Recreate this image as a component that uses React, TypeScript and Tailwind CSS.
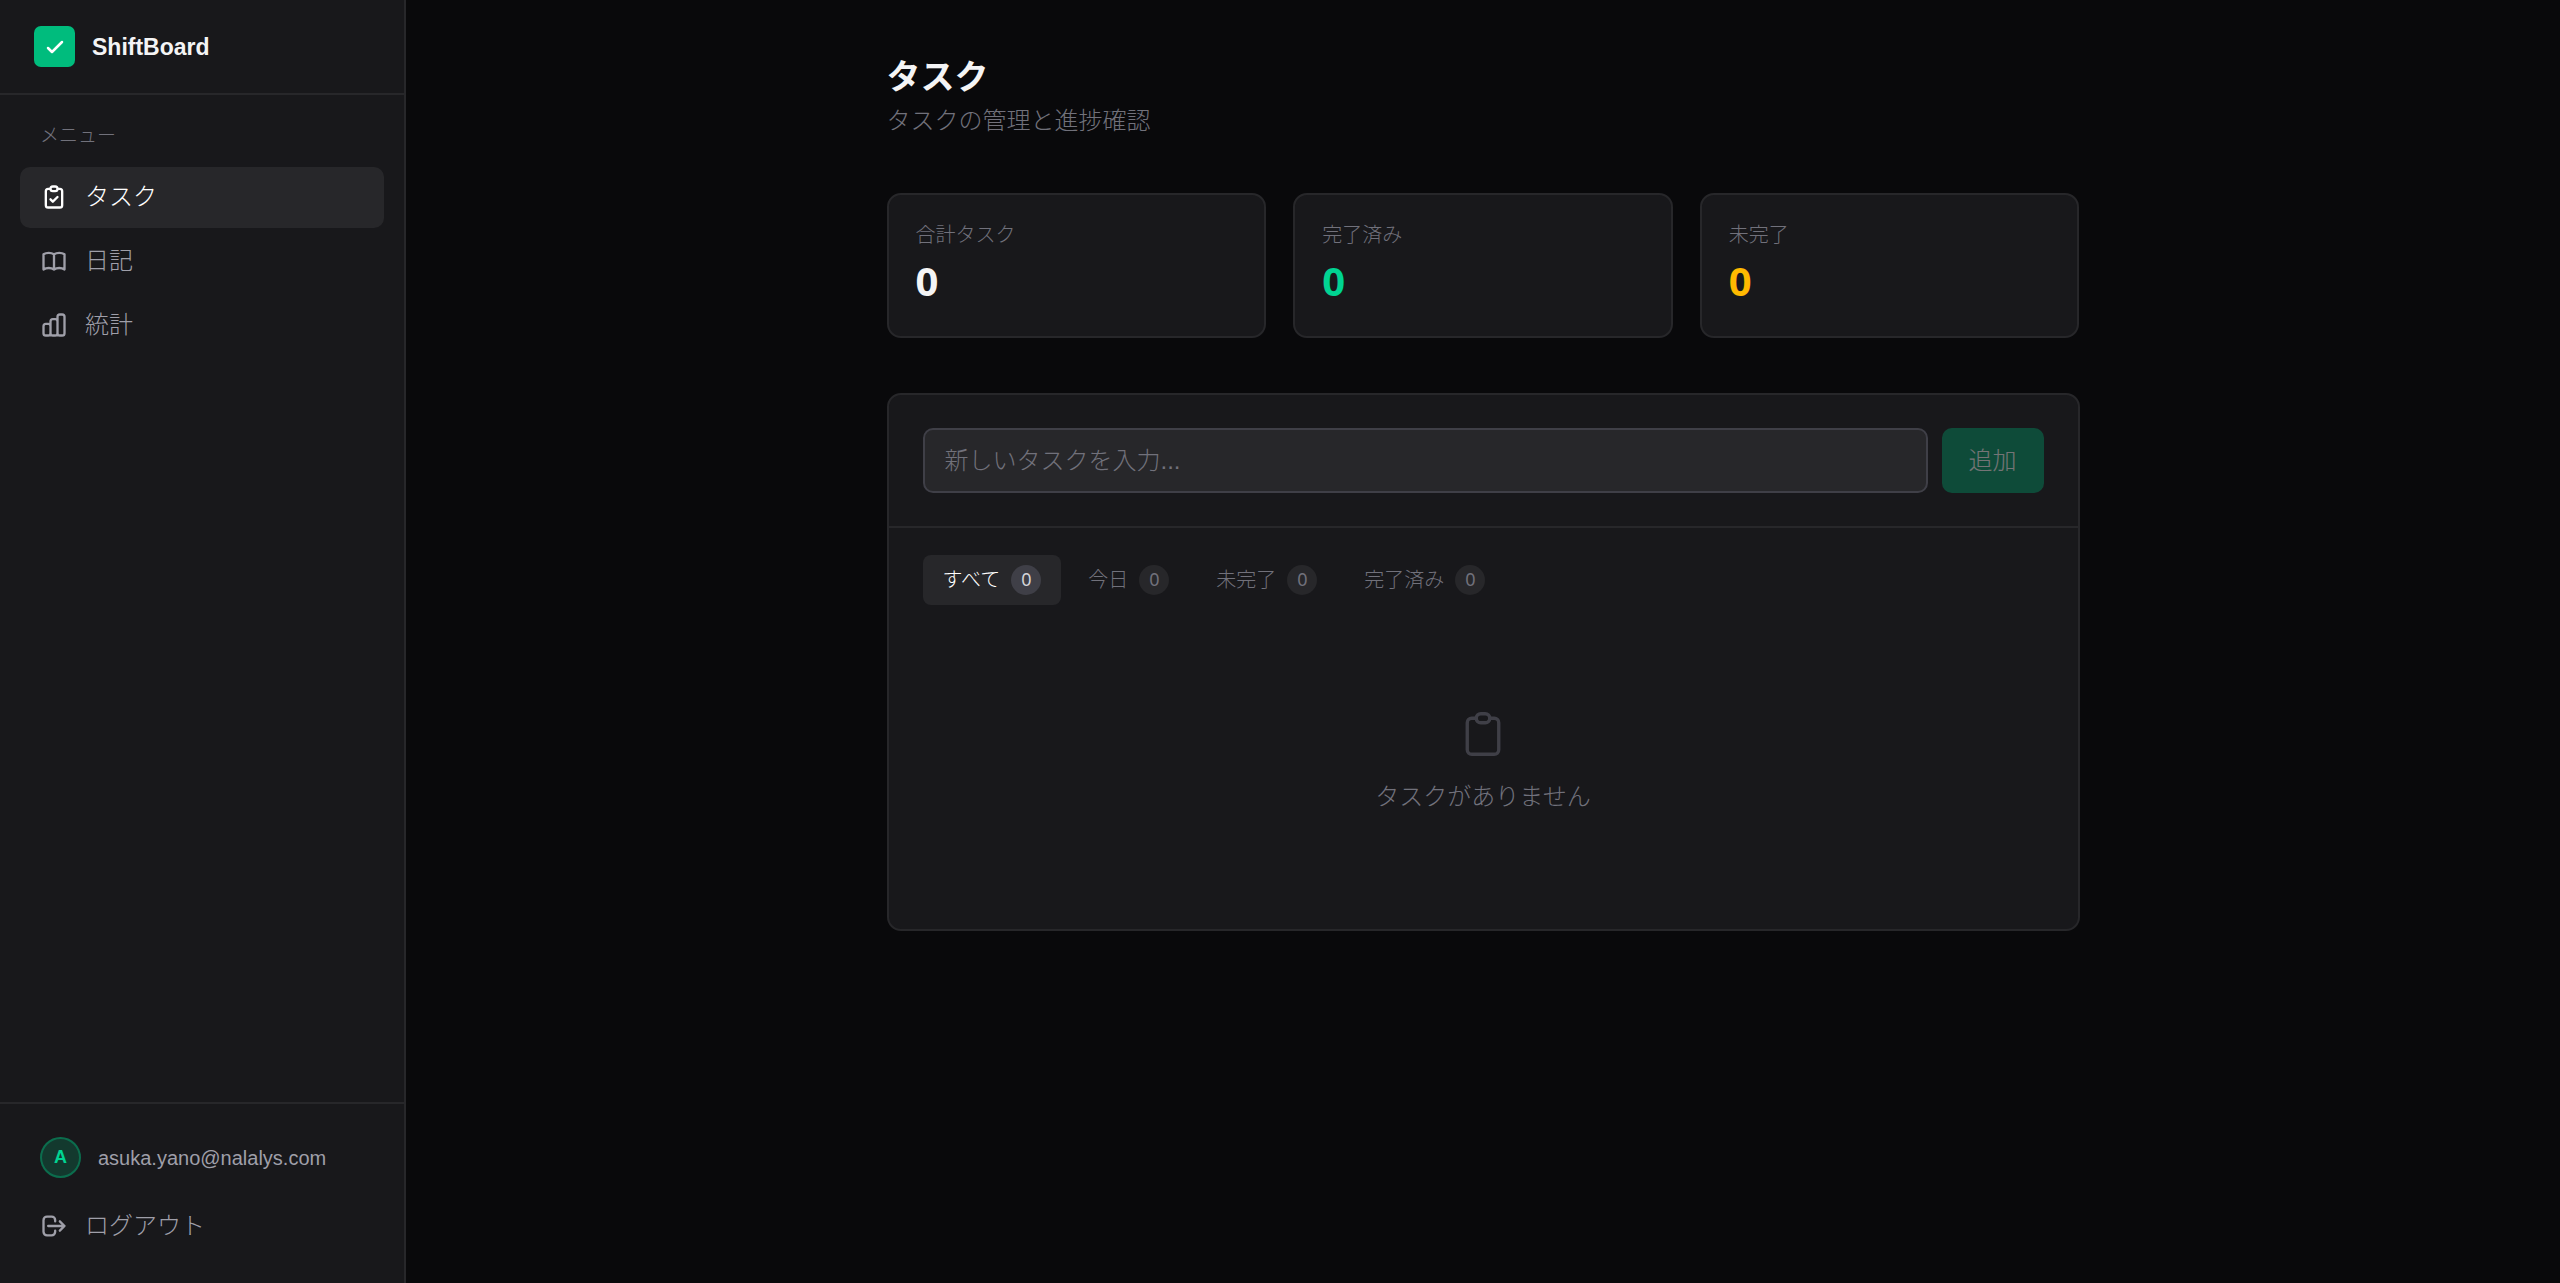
import { useState } from "react";
import type { ReactNode } from "react";

const CLIPBOARD =
  "M9 5H7a2 2 0 00-2 2v12a2 2 0 002 2h10a2 2 0 002-2V7a2 2 0 00-2-2h-2M9 5a2 2 0 002 2h2a2 2 0 002-2M9 5a2 2 0 012-2h2a2 2 0 012 2";

const PATHS = {
  check: "M5 13l4 4L19 7",
  clipboard: CLIPBOARD,
  tasks: CLIPBOARD + "m-6 9l2 2 4-4",
  book: "M12 6.253v13m0-13C10.832 5.477 9.246 5 7.5 5S4.168 5.477 3 6.253v13C4.168 18.477 5.754 18 7.5 18s3.332.477 4.5 1.253m0-13C13.168 5.477 14.754 5 16.5 5c1.747 0 3.332.477 4.5 1.253v13C19.832 18.477 18.247 18 16.5 18c-1.746 0-3.332.477-4.5 1.253",
  chart:
    "M9 19v-6a2 2 0 00-2-2H5a2 2 0 00-2 2v6a2 2 0 002 2h2a2 2 0 002-2zm0 0V9a2 2 0 012-2h2a2 2 0 012 2v10m-6 0a2 2 0 002 2h2a2 2 0 002-2m0 0V5a2 2 0 012-2h2a2 2 0 012 2v14a2 2 0 01-2 2h-2a2 2 0 01-2-2z",
  logout:
    "M17 16l4-4m0 0l-4-4m4 4H7m6 4v1a3 3 0 01-3 3H6a3 3 0 01-3-3V7a3 3 0 013-3h4a3 3 0 013 3v1",
};

function Icon({ name, className, stroke = 2 }: { name: keyof typeof PATHS; className: string; stroke?: number }) {
  return (
    <svg
      className={className}
      viewBox="0 0 24 24"
      fill="none"
      stroke="currentColor"
      strokeWidth={stroke}
      strokeLinecap="round"
      strokeLinejoin="round"
      aria-hidden="true"
    >
      <path d={PATHS[name]} />
    </svg>
  );
}

function NavItem({ icon, active, children }: { icon: keyof typeof PATHS; active?: boolean; children: ReactNode }) {
  return (
    <a
      href="#"
      aria-current={active ? "page" : undefined}
      className={`flex items-center gap-[17px] rounded-[10px] px-5 pt-3 pb-[13px] text-2xl leading-9 ${
        active ? "bg-zinc-800 text-white" : "text-zinc-400"
      }`}
    >
      <Icon name={icon} className="size-7 shrink-0" />
      <span>{children}</span>
    </a>
  );
}

function StatCard({ label, value, color }: { label: string; value: number; color: string }) {
  return (
    <div className="rounded-[14px] border-2 border-zinc-800 bg-zinc-900 px-[27px] pt-[26px] pb-[30px]">
      <p className="text-xl leading-7 text-zinc-500">{label}</p>
      <p className={`mt-[7px] font-['Noto_Sans',sans-serif] text-[40px] leading-[50px] font-bold ${color}`}>
        {value}
      </p>
    </div>
  );
}

const FILTERS = ["すべて", "今日", "未完了", "完了済み"];

export default function App() {
  const [filter, setFilter] = useState(FILTERS[0]);
  const [draft, setDraft] = useState("");

  return (
    <div className="flex min-h-screen bg-zinc-950 font-['Liberation_Sans','Noto_Sans_CJK_JP',sans-serif] font-light text-zinc-100">
      <aside className="flex w-[406px] shrink-0 flex-col border-r-2 border-zinc-800 bg-zinc-900">
        <div className="flex items-center gap-[17px] border-b-2 border-zinc-800 px-[34px] py-[26px]">
          <div className="flex size-[41px] items-center justify-center rounded-[7px] bg-emerald-500 text-white">
            <Icon name="check" className="size-6" stroke={2.5} />
          </div>
          <span className="text-[23px] leading-8 font-semibold">ShiftBoard</span>
        </div>

        <nav className="flex flex-1 flex-col gap-[3px] px-5 pt-[29px]" aria-label="メニュー">
          <p className="mb-4 px-5 text-[19px] leading-6 text-zinc-500">メニュー</p>
          <NavItem icon="tasks" active>
            タスク
          </NavItem>
          <NavItem icon="book">日記</NavItem>
          <NavItem icon="chart">統計</NavItem>
        </nav>

        <div className="border-t-2 border-zinc-800 px-5 pt-[33px] pb-[26px]">
          <div className="mb-[18px] flex items-center gap-[17px] px-5">
            <div className="flex size-[41px] items-center justify-center rounded-full border-2 border-emerald-500/40 bg-emerald-500/20 text-[18px] font-bold text-emerald-400">
              A
            </div>
            <span className="text-xl font-normal text-zinc-400">asuka.yano@nalalys.com</span>
          </div>
          <button
            type="button"
            className="flex w-full items-center gap-[17px] rounded-[10px] px-5 pt-3 pb-[13px] text-left text-2xl leading-9 text-zinc-400"
          >
            <Icon name="logout" className="size-7 shrink-0" />
            <span>ログアウト</span>
          </button>
        </div>
      </aside>

      <main className="flex-1 px-14 py-[54px]">
        <div className="mx-auto max-w-[1193px]">
          <h1 className="text-[34px] leading-[46px] font-bold">タスク</h1>
          <p className="pt-px text-2xl leading-10 text-zinc-500">タスクの管理と進捗確認</p>

          <section className="mt-[52px] grid grid-cols-3 gap-[27px]">
            <StatCard label="合計タスク" value={0} color="text-zinc-100" />
            <StatCard label="完了済み" value={0} color="text-emerald-400" />
            <StatCard label="未完了" value={0} color="text-amber-400" />
          </section>

          <section className="mt-[55px] rounded-[14px] border-2 border-zinc-800 bg-zinc-900">
            <form
              className="flex gap-[14px] border-b-2 border-zinc-800 px-[34px] py-[33px]"
              onSubmit={(e) => e.preventDefault()}
            >
              <input
                type="text"
                aria-label="新しいタスク"
                placeholder="新しいタスクを入力..."
                value={draft}
                onChange={(e) => setDraft(e.target.value)}
                className="h-[65px] min-w-0 flex-1 rounded-[10px] border-2 border-zinc-700 bg-zinc-800 px-5 text-2xl outline-none placeholder:text-zinc-500"
              />
              <button
                type="submit"
                disabled={!draft}
                className="rounded-[10px] bg-emerald-600 px-[27px] text-2xl text-white disabled:opacity-40"
              >
                追加
              </button>
            </form>

            <div className="flex gap-[7px] px-[34px] pt-[27px]">
              {FILTERS.map((name) => {
                const on = name === filter;
                return (
                  <button
                    key={name}
                    type="button"
                    aria-pressed={on}
                    onClick={() => setFilter(name)}
                    className={`flex items-center gap-[11px] rounded-lg px-5 py-[10px] text-xl ${
                      on ? "bg-zinc-800 text-white" : "text-zinc-500"
                    }`}
                  >
                    {name}
                    <span
                      className={`flex size-[30px] items-center justify-center rounded-full font-['Noto_Sans',sans-serif] text-[18px] font-normal ${
                        on ? "bg-zinc-700 text-zinc-300" : "bg-zinc-800 text-zinc-500"
                      }`}
                    >
                      0
                    </span>
                  </button>
                );
              })}
            </div>

            <div className="flex flex-col items-center pt-[102px] pb-[114px]">
              <Icon name="clipboard" className="size-[54px] text-zinc-700" stroke={1.5} />
              <p className="mt-[18px] text-2xl leading-9 text-zinc-500">タスクがありません</p>
            </div>
          </section>
        </div>
      </main>
    </div>
  );
}
